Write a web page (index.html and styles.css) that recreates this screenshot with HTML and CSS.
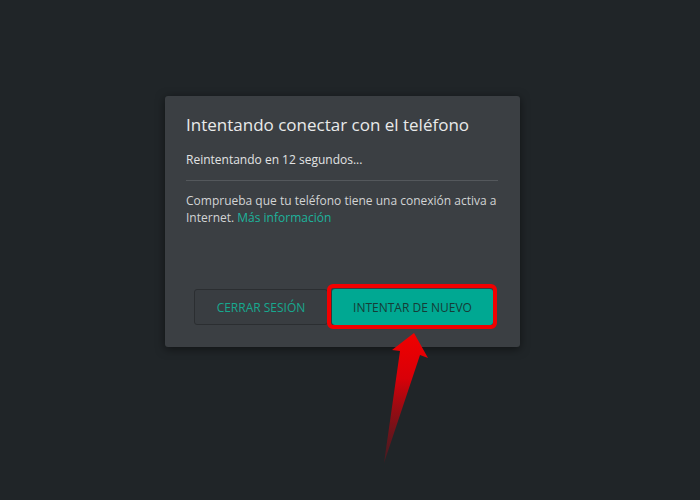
FILE: index.html
```html
<!DOCTYPE html>
<html lang="es">
<head>
<meta charset="utf-8">
<title>Intentando conectar</title>
<link rel="stylesheet" href="styles.css">
</head>
<body>
<div class="stage">
  <div class="dialog">
    <h1 class="title">Intentando conectar con el teléfono</h1>
    <p class="status">Reintentando en 12 segundos...</p>
    <div class="divider"></div>
    <p class="info">Comprueba que tu teléfono tiene una conexión activa a Internet. <a class="link" href="#">Más información</a></p>
    <div class="actions">
      <button class="btn btn-secondary">CERRAR SESIÓN</button>
      <span class="highlight">
        <button class="btn btn-primary">INTENTAR DE NUEVO</button>
      </span>
    </div>
  </div>
  <svg class="arrow" width="700" height="500" viewBox="0 0 700 500">
    <defs>
      <linearGradient id="ag" x1="0" y1="333" x2="0" y2="463" gradientUnits="userSpaceOnUse">
        <stop offset="0" stop-color="#f00000"/>
        <stop offset="0.35" stop-color="#d90008"/>
        <stop offset="1" stop-color="#8a0a14" stop-opacity="0.35"/>
      </linearGradient>
    </defs>
    <path d="M414 333 L428 358 L420 355 L384 463 L400 351 L392 350 Z" fill="url(#ag)"/>
  </svg>
</div>
</body>
</html>
```

FILE: styles.css
```css
html, body {
  margin: 0;
  padding: 0;
}
body {
  background: #202528;
  font-family: "Open Sans", "Noto Sans", sans-serif;
  width: 700px;
  height: 500px;
  overflow: hidden;
}
.stage {
  position: relative;
  width: 700px;
  height: 500px;
  padding-top: 96px;
  box-sizing: border-box;
}
.dialog {
  margin-left: 165px;
  width: 355px;
  height: 251px;
  box-sizing: border-box;
  background: #3b3f43;
  border-radius: 3px;
  box-shadow: 0 2px 10px rgba(0, 0, 0, 0.5);
  padding: 17px 22px 22px 21px;
  display: flex;
  flex-direction: column;
}
.title {
  margin: 0;
  font-size: 17px;
  font-weight: 400;
  line-height: 24px;
  color: #e9eaea;
}
.status {
  margin: 14px 0 0;
  font-size: 12px;
  line-height: 18px;
  color: #e2e3e3;
}
.divider {
  margin-top: 11px;
  height: 1px;
  background: #54585c;
}
.info {
  margin: 11px 0 0;
  font-size: 12px;
  line-height: 17px;
  color: #d2d4d5;
}
.link {
  color: #1db39c;
  text-decoration: none;
}
.actions {
  margin-top: auto;
  display: flex;
  gap: 4px;
  padding-left: 8px;
}
.btn {
  height: 36px;
  font-family: inherit;
  font-size: 12px;
  border-radius: 3px;
  padding: 0;
  cursor: pointer;
}
.btn-secondary {
  width: 134px;
  background: #393d41;
  border: 1px solid #2b2e31;
  color: #17a88f;
}
.btn-primary {
  display: block;
  width: 161px;
  background: #00a892;
  border: none;
  color: #163c37;
  box-shadow: 0 1px 3px rgba(0, 0, 0, 0.4);
}
.highlight {
  position: relative;
  display: block;
}
.highlight::after {
  content: "";
  position: absolute;
  left: -5px;
  right: -4px;
  top: -5px;
  bottom: -4px;
  border: 4px solid #f20000;
  border-radius: 6px;
}
.arrow {
  position: absolute;
  left: 0;
  top: 0;
}
```
